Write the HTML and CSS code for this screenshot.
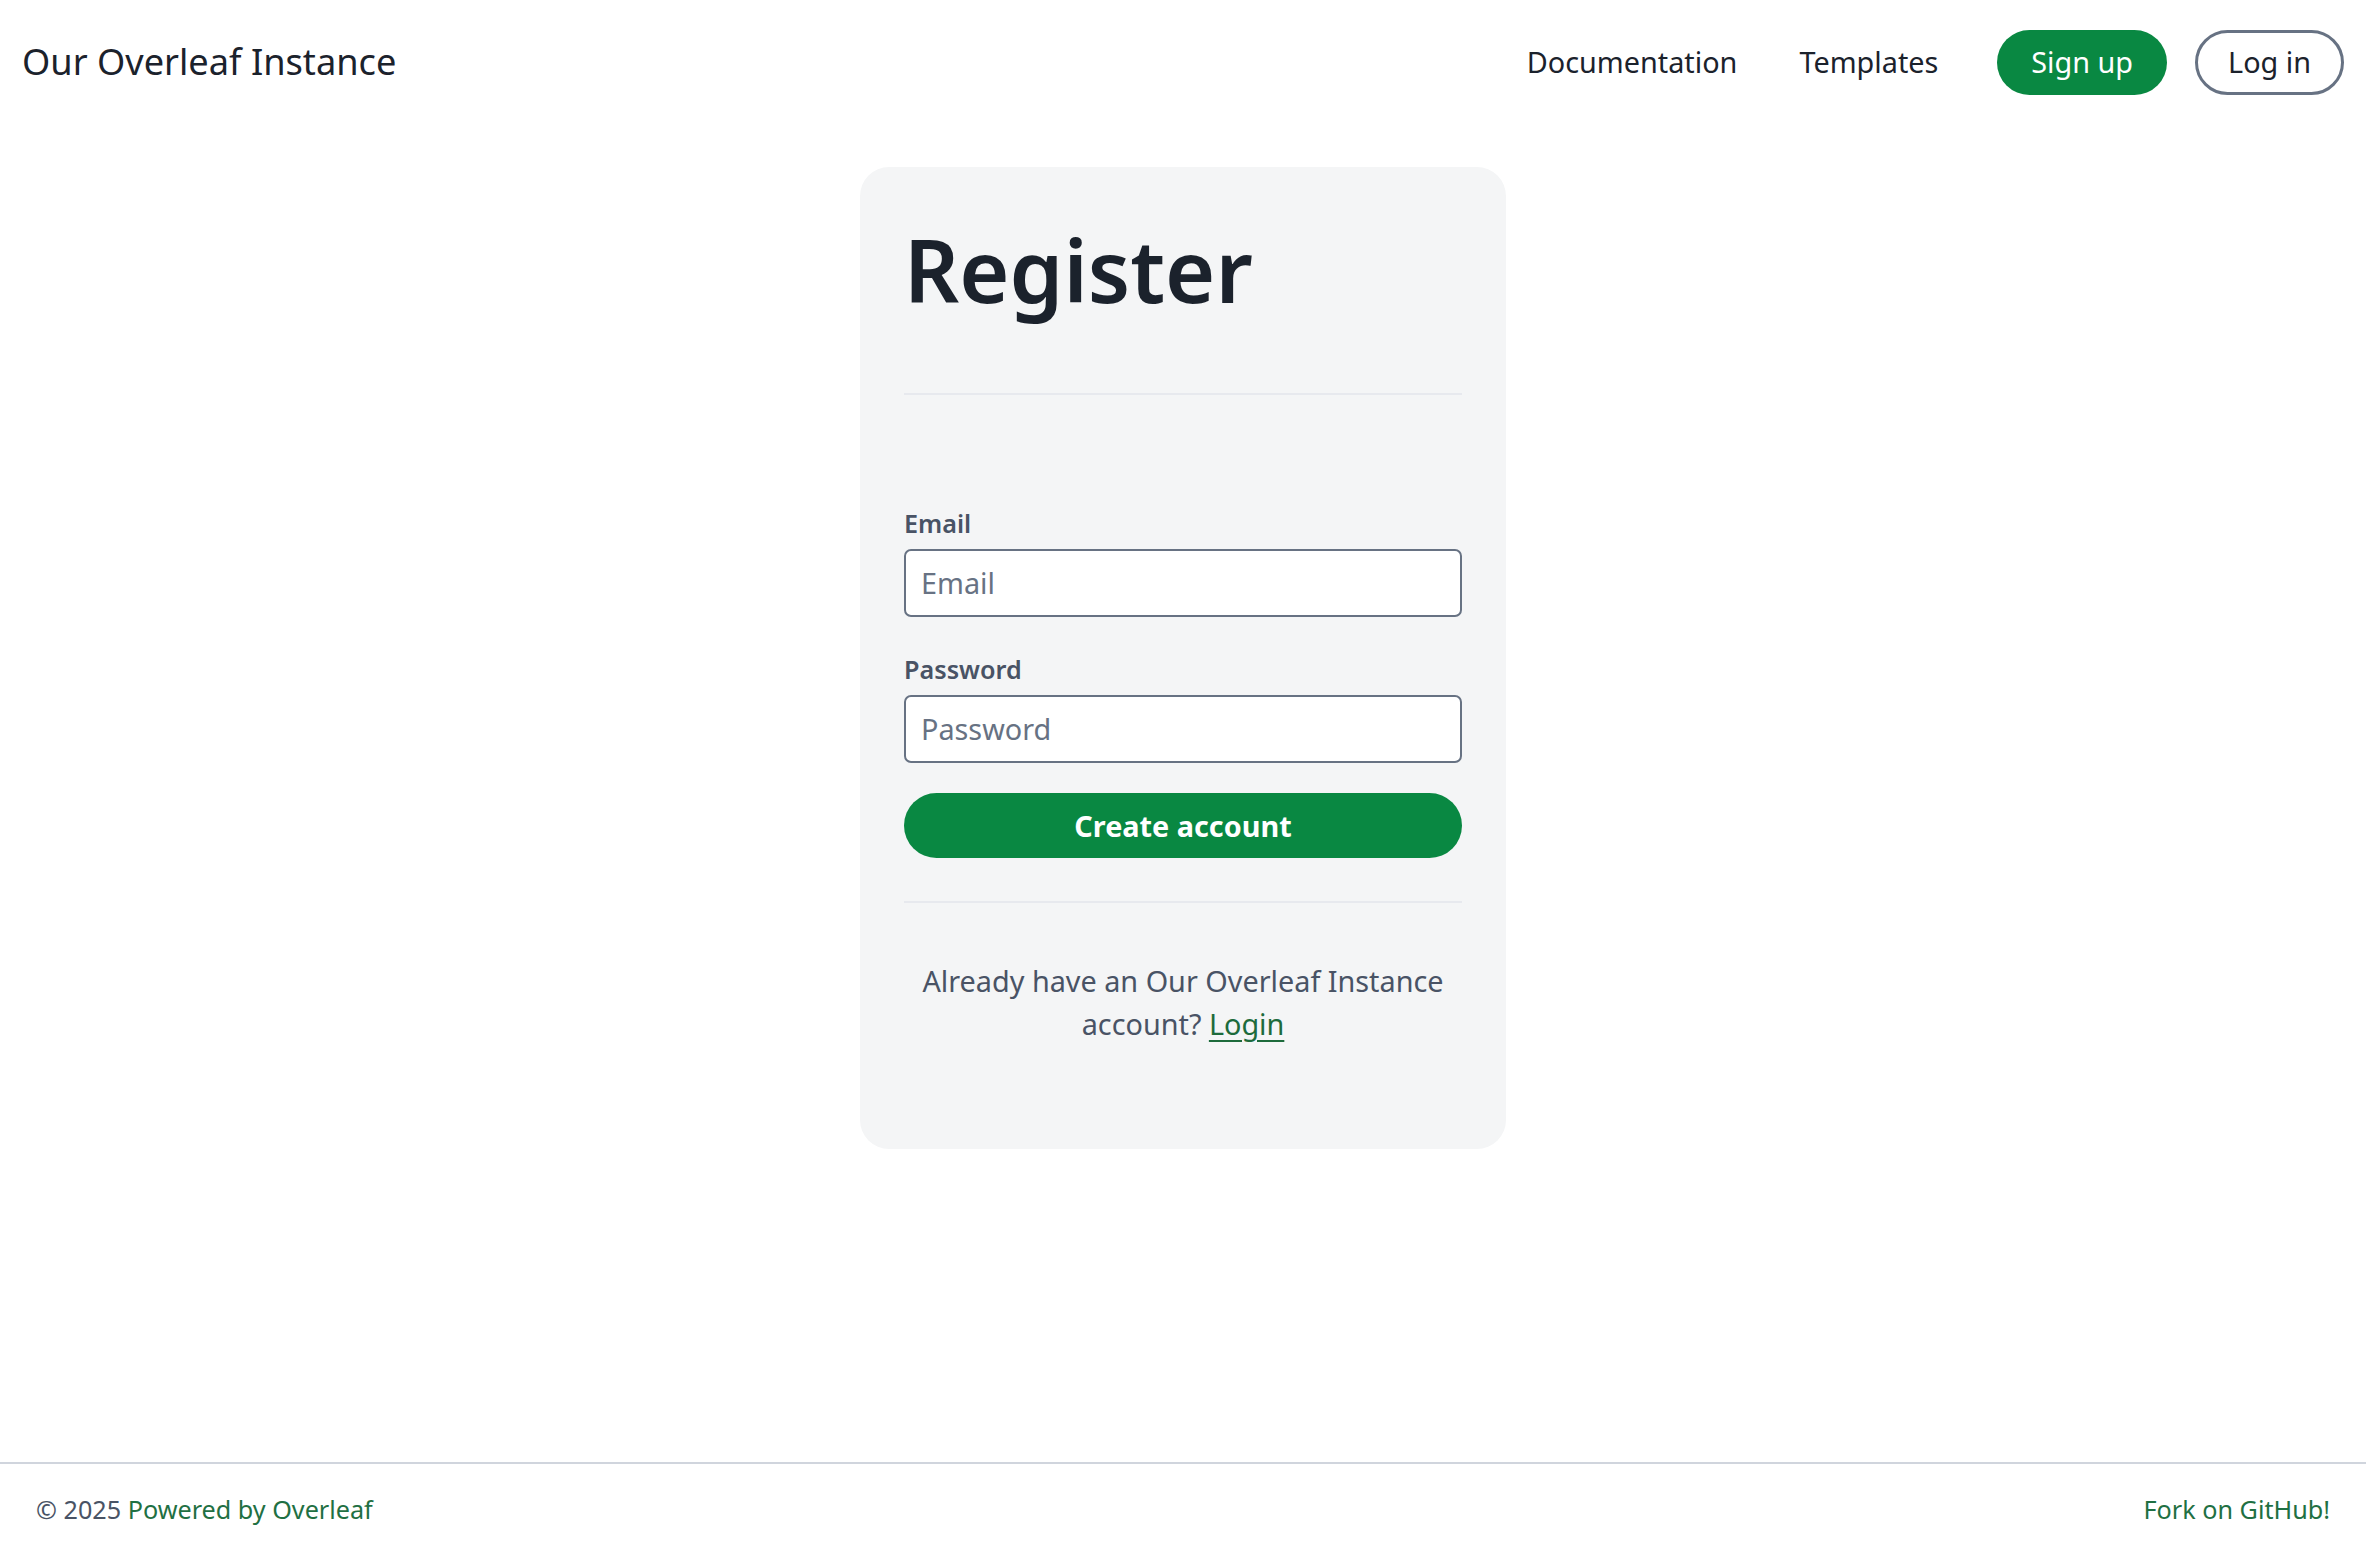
FILE: index.html
```html
<!DOCTYPE html>
<html lang="en">
<head>
<meta charset="utf-8">
<title>Register - Our Overleaf Instance</title>
<link rel="stylesheet" href="styles.css">
</head>
<body>
<div class="page">
  <header class="navbar">
    <a class="brand" href="#">Our Overleaf Instance</a>
    <nav class="nav">
      <a class="nav-link" href="#">Documentation</a>
      <a class="nav-link" href="#">Templates</a>
      <a class="btn btn-primary nav-btn" href="#">Sign up</a>
      <a class="btn btn-outline nav-btn" href="#">Log in</a>
    </nav>
  </header>
  <main class="content">
    <div class="card">
      <h1 class="card-title">Register</h1>
      <hr class="divider">
      <form class="form">
        <div class="form-group">
          <label class="form-label" for="email">Email</label>
          <input class="form-control" id="email" type="email" placeholder="Email">
        </div>
        <div class="form-group">
          <label class="form-label" for="password">Password</label>
          <input class="form-control" id="password" type="password" placeholder="Password">
        </div>
        <button class="btn btn-primary btn-block" type="button">Create account</button>
      </form>
      <hr class="divider divider-bottom">
      <p class="login-text">Already have an Our Overleaf Instance account? <a class="login-link" href="#">Login</a></p>
    </div>
  </main>
  <footer class="footer">
    <div class="footer-left">© 2025 <a class="footer-link" href="#">Powered by Overleaf</a></div>
    <div class="footer-right"><a class="footer-link" href="#">Fork on GitHub!</a></div>
  </footer>
</div>
</body>
</html>
```
FILE: styles.css
```css
* { box-sizing: border-box; }
html, body { margin: 0; padding: 0; }
body {
  font-family: "Noto Sans", "DejaVu Sans", sans-serif;
  color: #1b222c;
  background: #ffffff;
  font-size: 28.8px;
  line-height: 1.5;
}
a { text-decoration: none; }
.page {
  min-height: 100vh;
  display: flex;
  flex-direction: column;
}
.navbar {
  height: 124px;
  display: flex;
  align-items: center;
  justify-content: space-between;
  padding: 0 22px 0 22px;
}
.brand {
  font-size: 36.2px;
  color: #1b222c;
  line-height: 1.2;
}
.nav {
  display: flex;
  align-items: center;
}
.nav-link {
  color: #1b222c;
  font-size: 28.8px;
  padding: 0 31px;
}
.btn {
  display: inline-flex;
  align-items: center;
  justify-content: center;
  height: 65px;
  border-radius: 33px;
  border: 2px solid transparent;
  font-family: inherit;
  font-size: 28.8px;
  cursor: pointer;
}
.btn-primary {
  background: #098842;
  color: #ffffff;
}
.btn-outline {
  background: #ffffff;
  color: #1b222c;
  border-color: #677283;
}
.nav-btn { margin-left: 28px; }
.nav-btn.btn-primary { padding: 0 32px; margin-left: 28px; }
.nav-btn.btn-outline { padding: 0 30px; border-width: 3px; }
.content {
  flex: 1;
  display: flex;
  justify-content: center;
  align-items: flex-start;
  padding-top: 43px;
}
.card {
  width: 646px;
  background: #f4f5f6;
  border-radius: 29px;
  padding: 43px 44px 104px;
}
.card-title {
  margin: 0;
  font-size: 86px;
  font-weight: 600;
  line-height: 1.2;
  padding-top: 8px;
  color: #1b222c;
}
.divider {
  border: 0;
  height: 2px;
  background: #e7e9ee;
  margin: 72px 0 110px;
}
.form-group {
  display: flex;
  flex-direction: column;
  margin-bottom: 34px;
}
.form-label {
  font-size: 25.2px;
  font-weight: 600;
  color: #495365;
  line-height: 1.5;
  margin-bottom: 6px;
}
.form-control {
  height: 68px;
  border: 2px solid #677283;
  border-radius: 7px;
  background: #ffffff;
  font-family: inherit;
  font-size: 28.8px;
  padding: 0 15px;
  color: #1b222c;
}
.form-control::placeholder { color: #677283; }
.btn-block {
  width: 100%;
  font-weight: 700;
  margin-top: -4px;
}
.divider-bottom { margin: 43px 0 56px; }
.login-text {
  margin: 0;
  text-align: center;
  color: #495365;
}
.login-link {
  color: #1d6b3c;
  text-decoration: underline;
  text-underline-offset: 5px;
  text-decoration-thickness: 2px;
}
.footer {
  border-top: 2px solid #d0d5dd;
  display: flex;
  justify-content: space-between;
  padding: 27px 36px 22px;
  font-size: 25.2px;
  color: #495365;
}
.footer-link { color: #1f7043; }
```
